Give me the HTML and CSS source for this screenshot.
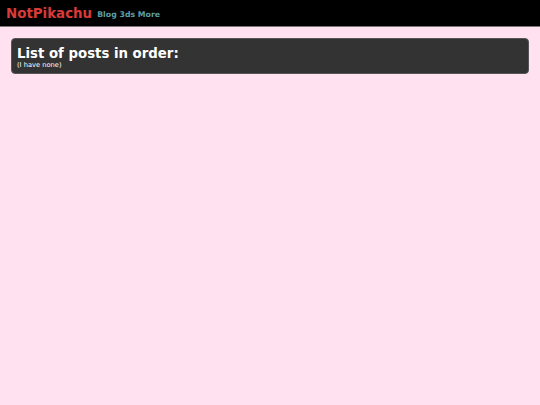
FILE: index.html
```html
<!DOCTYPE html>
<html>
<head>
<meta charset="utf-8">
<link rel="stylesheet" href="styles.css">
</head>
<body>
<header class="topbar">
  <span class="brand">NotPikachu</span>
  <nav class="links"><a href="#">Blog</a> <a href="#">3ds</a> <a href="#">More</a></nav>
</header>
<main class="content">
  <section class="card">
    <h1 class="card-title">List of posts in order:</h1>
    <p class="card-note">(I have none)</p>
  </section>
</main>
</body>
</html>
```
FILE: styles.css
```css
html, body {
  margin: 0;
  padding: 0;
  background: #ffe1f0;
  font-family: "DejaVu Sans", sans-serif;
}
.topbar {
  background: #000;
  height: 26px;
  border-bottom: 1px solid #777;
  display: flex;
  align-items: center;
  gap: 5px;
  padding-left: 6px;
}
.brand {
  color: #d93a3a;
  font-weight: bold;
  font-size: 13.4px;
}
.links {
  font-size: 7.8px;
  font-weight: bold;
  padding-top: 3px;
}
.links a {
  color: #5e9ea4;
  text-decoration: none;
}
.content {
  padding: 11px 11px;
}
.card {
  background: #333;
  border: 1px solid #555;
  border-radius: 4px;
  padding: 7px 5px 4px;
  color: #fff;
}
.card-title {
  margin: 0;
  font-size: 13.3px;
  font-weight: bold;
  line-height: 15px;
}
.card-note {
  margin: 0;
  font-size: 6.7px;
  line-height: 8px;
}
```
